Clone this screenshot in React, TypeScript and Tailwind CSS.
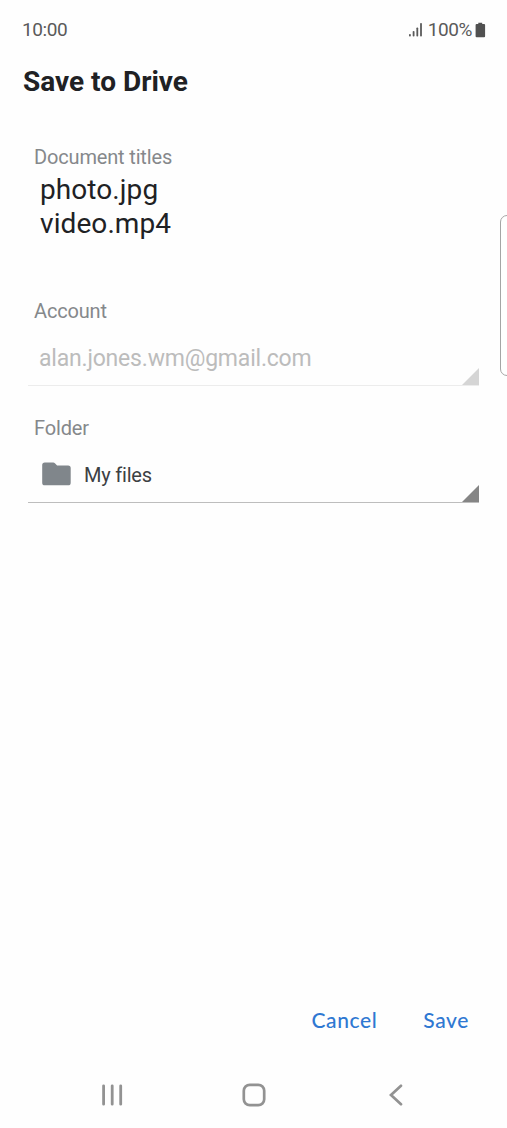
import type { ReactNode } from "react";

function FieldLabel({ children }: { children: ReactNode }) {
  return (
    <div className="pl-1.5 text-[20px] leading-6 tracking-[-0.16px] text-[#85888b]">{children}</div>
  );
}

function StatusBar() {
  return (
    <div className="flex h-[60px] items-center justify-between pr-[21px] pl-[22px] text-[19px] tracking-[-0.4px] text-[#5a5a5a]">
      <span>10:00</span>
      <span className="flex items-center">
        <svg width="13" height="14" viewBox="0 0 13 14" fill="#5a5a5a" className="mr-[6px]">
          <rect y="11" width="1.8" height="2.5" rx=".8" />
          <rect x="3.7" y="8" width="1.8" height="5.5" rx=".8" />
          <rect x="7.4" y="4.5" width="1.8" height="9" rx=".8" />
          <rect x="11.1" y="0" width="1.8" height="13.5" rx=".8" />
        </svg>
        100%
        <svg width="11" height="16" viewBox="0 0 11 16" fill="#505050" className="ml-[3px]">
          <path d="M3.3.7h3.9v1.2h1.9a1 1 0 0 1 1 1v11.3a1 1 0 0 1-1 1H1.6a1 1 0 0 1-1-1V2.9a1 1 0 0 1 1-1h1.7z" />
        </svg>
      </span>
    </div>
  );
}

function NavBar() {
  return (
    <div className="flex h-[66px] items-center justify-between pr-[104px] pl-[102px] text-[#929292]">
      <svg width="21" height="22" fill="none" stroke="currentColor" strokeWidth="2.8" strokeLinecap="round">
        <path d="M1.6 1.8v18.4M10.2 1.8v18.4M18.7 1.8v18.4" />
      </svg>
      <svg width="24" height="24" fill="none" stroke="currentColor" strokeWidth="2.7" className="-translate-x-[2px]">
        <rect x="1.8" y="1.8" width="20.4" height="20.4" rx="6" />
      </svg>
      <svg width="14" height="22" fill="none" stroke="currentColor" strokeWidth="2.7" strokeLinecap="round">
        <path d="M12 1.8 2 11l10 9.2" />
      </svg>
    </div>
  );
}

export default function App() {
  return (
    <div className="relative flex h-[1128px] w-[507px] flex-col overflow-hidden bg-[#fefefe] font-['Roboto',sans-serif]">
      <StatusBar />
      <h1 className="pl-[23px] text-[28px] leading-[44px] font-bold text-[#202124]">Save to Drive</h1>

      <main className="flex-1 pr-7 pl-7 pt-[41px]">
        <FieldLabel>Document titles</FieldLabel>
        <div className="pt-[4px] pl-[12px] text-[28px] leading-[34px] tracking-[0.08px] text-[#202124]">
          <div>photo.jpg</div>
          <div>video.mp4</div>
        </div>

        <div className="pt-[58px]">
          <FieldLabel>Account</FieldLabel>
          <div className="flex h-[63px] items-end justify-between border-b border-[#ececec]">
            <span className="pb-[10px] pl-[11px] text-[23px] leading-[32px] tracking-[-0.2px] text-[#bcbcbc]">
              alan.jones.wm@gmail.com
            </span>
            <svg width="17" height="17" fill="#d5d5d5">
              <path d="M17 0v17H0z" />
            </svg>
          </div>
        </div>

        <div className="pt-[30px]">
          <FieldLabel>Folder</FieldLabel>
          <div className="flex h-[63px] items-end justify-between border-b border-[#bdbdbd]">
            <span className="flex items-center gap-[13px] pb-[15px] pl-[14px] text-[20px] leading-6 tracking-[-0.2px] text-[#3c4043]">
              <svg width="29" height="24" viewBox="0 0 29 24" fill="#80868b" className="-translate-y-px">
                <path d="M2.8.5h8.4q1 0 1.7.7l2.2 2.2h11a2.6 2.6 0 0 1 2.6 2.6v14.7a2.6 2.6 0 0 1-2.6 2.6H2.8a2.6 2.6 0 0 1-2.6-2.6V3.1A2.6 2.6 0 0 1 2.8.5z" />
              </svg>
              My files
            </span>
            <svg width="17" height="17" fill="#858585">
              <path d="M17 0v17H0z" />
            </svg>
          </div>
        </div>
      </main>

      <div className="flex h-[82px] items-center justify-end gap-[46px] pr-[38px] pb-[2px] font-['Lato',sans-serif] text-[21px] font-medium tracking-[0.6px] text-[#2f78d2]">
        <button>Cancel</button>
        <button>Save</button>
      </div>
      <NavBar />

      {/* edge panel handle */}
      <div className="absolute top-[215px] -right-[6px] h-[161px] w-[13px] rounded-l-[7px] border border-[#a5a5a5] bg-white" />
    </div>
  );
}
